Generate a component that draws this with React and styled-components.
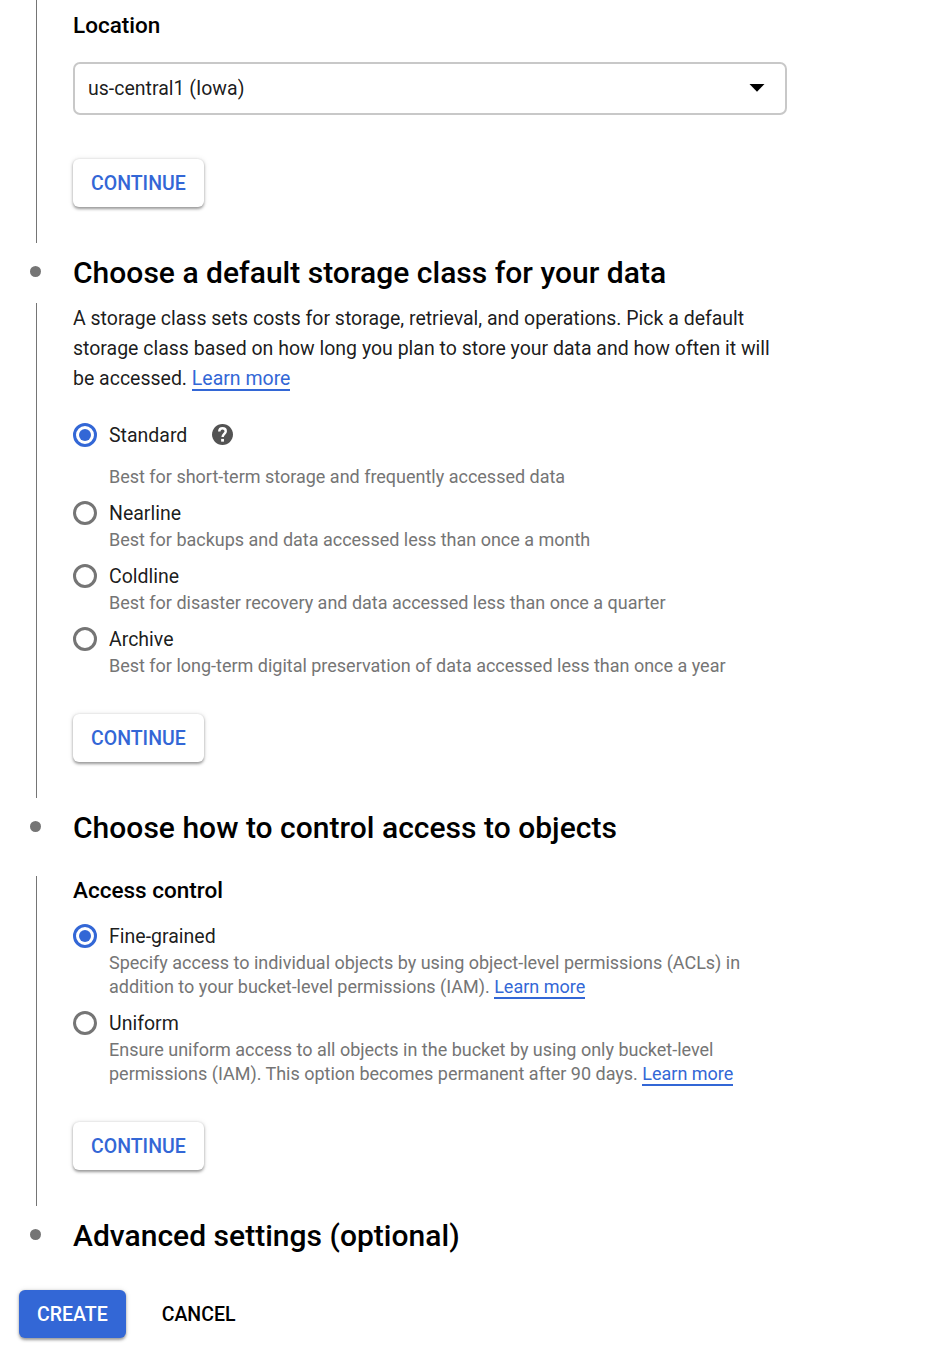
import React from "react";
import styled, { createGlobalStyle, css } from "styled-components";

const GlobalStyle = createGlobalStyle`
  * { box-sizing: border-box; }
  body {
    margin: 0;
    background: #fff;
    color: rgba(0, 0, 0, 0.9);
    font-family: Roboto, "Liberation Sans", sans-serif;
    font-size: 19.5px;
  }
`;

const Page = styled.main`
  min-height: 1362px;
`;

const StepHeader = styled.header`
  display: flex;
  align-items: center;
  height: 60px;
  padding-left: 30px;
  margin-bottom: ${(p) => p.$gap || 0}px;
`;

const StepDot = styled.span`
  width: 11px;
  height: 11px;
  margin: 0 32px 3px 0;
  border-radius: 50%;
  background: #757575;
`;

const StepTitle = styled.h2`
  margin: 0;
  color: #000;
  font-size: 30px;
  font-weight: 500;
  line-height: 36px;
  letter-spacing: 0.02px;
  white-space: nowrap;
`;

const StepBody = styled.section`
  margin-left: 36px;
  padding: ${(p) => p.$top || 0}px 156px 36px 36px;
  border-left: 1px solid #757575;
`;

const FieldTitle = styled.h3`
  margin: 0 0 ${(p) => p.$gap}px;
  color: #000;
  font-size: 22.5px;
  font-weight: 500;
  line-height: 28px;
`;

const Select = styled.div`
  display: flex;
  align-items: center;
  justify-content: space-between;
  width: 714px;
  height: 53px;
  margin-bottom: 44px;
  padding: 0 20.5px 1px 13px;
  border: 2px solid #c8c8c8;
  border-radius: 7px;
`;

const Caret = styled.svg`
  width: 16px;
  height: 8px;
  margin-bottom: 1px;
`;

const Intro = styled.p`
  width: 714px;
  margin: 0 0 26px;
  padding-top: 1px;
  line-height: 30px;
  letter-spacing: -0.008px;
`;

const Link = styled.a`
  color: #3367d6;
  text-decoration: none;
  border-bottom: 2px solid #3367d6;
  ${(p) =>
    p.$tight &&
    css`
      display: inline-block;
      line-height: 21px;
    `}
`;

const Options = styled.div`
  display: flex;
  flex-direction: column;
  gap: 9px;
  margin-bottom: 36px;
`;

const OptionLabel = styled.label`
  display: flex;
  align-items: center;
  height: 30px;
  margin-bottom: ${(p) => (p.$spaced ? 15 : 0)}px;
`;

const Radio = styled.span`
  display: flex;
  align-items: center;
  justify-content: center;
  width: 24px;
  height: 24px;
  margin-right: 12px;
  border: 3px solid ${(p) => (p.$checked ? "#3367d6" : "#757575")};
  border-radius: 50%;
  ${(p) =>
    p.$checked &&
    css`
      &::after {
        content: "";
        width: 12px;
        height: 12px;
        border-radius: 50%;
        background: #3367d6;
      }
    `}
`;

const HelpIcon = styled.svg`
  width: 21px;
  height: 21px;
  margin: 0 0 1px 25px;
  fill: #535353;
  stroke: #535353;
  stroke-width: 0;
`;

const Hint = styled.p`
  margin: 0 0 0 36px;
  color: #757575;
  font-size: 18px;
  line-height: 24px;
  letter-spacing: -0.008px;
  white-space: nowrap;
`;

const Button = styled.button`
  height: 48px;
  display: block;
  padding: 1px 18px 0;
  border: 0;
  border-radius: 6px;
  background: #fff;
  color: #3367d6;
  font: 500 19.5px/47px Roboto, sans-serif;
  box-shadow: 0 1.5px 3px rgba(0, 0, 0, 0.38), 0 0 6px rgba(0, 0, 0, 0.08);
  ${(p) =>
    p.$kind === "primary" &&
    css`
      background: #3367d6;
      color: #fff;
    `}
  ${(p) =>
    p.$kind === "text" &&
    css`
      background: transparent;
      color: #000;
      box-shadow: none;
    `}
`;

const Footer = styled.footer`
  display: flex;
  gap: 18px;
  padding: 24px 19px;
`;

const LearnMore = ({ tight }) => <Link $tight={tight}>Learn more</Link>;

function Header({ children, gap }) {
  return (
    <StepHeader $gap={gap}>
      <StepDot />
      <StepTitle>{children}</StepTitle>
    </StepHeader>
  );
}

function Option({ label, checked, help, children }) {
  return (
    <div>
      <OptionLabel $spaced={help}>
        <Radio $checked={checked} />
        {label}
        {help && (
          <HelpIcon viewBox="2 2 20 20">
            <path d="M12 2C6.48 2 2 6.48 2 12s4.48 10 10 10 10-4.48 10-10S17.52 2 12 2z" />
            <path
              d="M8.9 9.1A3.1 3.1 0 0 1 12 6.1c1.8 0 3.1 1.2 3.1 2.8 0 2.4-3 2.7-3 5.5"
              style={{ fill: "none", stroke: "#fff", strokeWidth: 2.3 }}
            />
            <path d="M10.7 16.2h2.7v2.6h-2.7z" style={{ fill: "#fff" }} />
          </HelpIcon>
        )}
      </OptionLabel>
      <Hint>{children}</Hint>
    </div>
  );
}

export default function App() {
  return (
    <Page>
      <GlobalStyle />
      <StepBody $top={11}>
        <FieldTitle $gap={23}>Location</FieldTitle>
        <Select>
          us-central1 (Iowa)
          <Caret viewBox="0 0 16 8">
            <path d="M0.5 0h15L8 7.7z" />
          </Caret>
        </Select>
        <Button>CONTINUE</Button>
      </StepBody>

      <Header>Choose a default storage class for your data</Header>
      <StepBody>
        <Intro>
          A storage class sets costs for storage, retrieval, and operations. Pick a default
          <br />
          storage class based on how long you plan to store your data and how often it will
          <br />
          be accessed. <LearnMore tight />
        </Intro>
        <Options>
          <Option label="Standard" checked help>
            Best for short-term storage and frequently accessed data
          </Option>
          <Option label="Nearline">Best for backups and data accessed less than once a month</Option>
          <Option label="Coldline">
            Best for disaster recovery and data accessed less than once a quarter
          </Option>
          <Option label="Archive">
            Best for long-term digital preservation of data accessed less than once a year
          </Option>
        </Options>
        <Button>CONTINUE</Button>
      </StepBody>

      <Header gap={18}>Choose how to control access to objects</Header>
      <StepBody>
        <FieldTitle $gap={17}>Access control</FieldTitle>
        <Options>
          <Option label="Fine-grained" checked>
            Specify access to individual objects by using object-level permissions (ACLs) in
            <br />
            addition to your bucket-level permissions (IAM). <LearnMore />
          </Option>
          <Option label="Uniform">
            Ensure uniform access to all objects in the bucket by using only bucket-level
            <br />
            permissions (IAM). This option becomes permanent after 90 days. <LearnMore />
          </Option>
        </Options>
        <Button>CONTINUE</Button>
      </StepBody>

      <Header>Advanced settings (optional)</Header>
      <Footer>
        <Button $kind="primary">CREATE</Button>
        <Button $kind="text">CANCEL</Button>
      </Footer>
    </Page>
  );
}
